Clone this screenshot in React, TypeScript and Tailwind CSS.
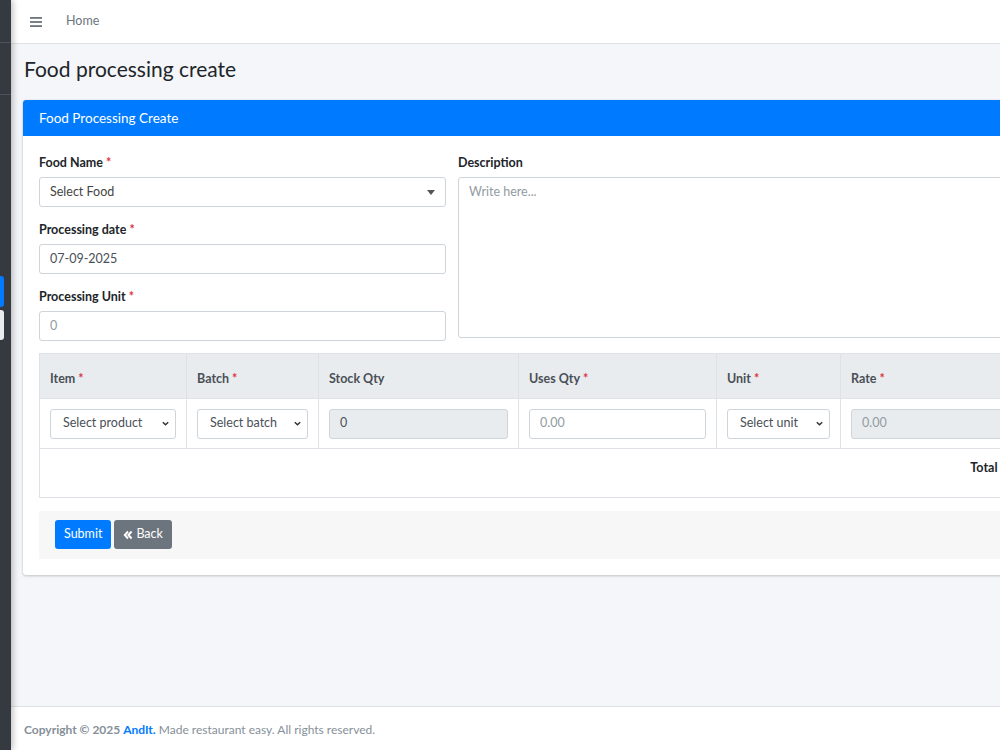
import React from 'react';

const font = { fontFamily: 'Lato, "Noto Sans", sans-serif' };

function Req() {
  return <span className="text-[#dc3545] ml-[3px]">*</span>;
}

function Chevron() {
  return (
    <svg width="9" height="9" viewBox="0 0 10 10" className="shrink-0">
      <path d="M2 3.5 L5 6.5 L8 3.5" fill="none" stroke="#333" strokeWidth="1.6" />
    </svg>
  );
}

function NativeSelect({ label }: { label: string }) {
  return (
    <div className="h-[30px] border border-[#ced4da] rounded-[3px] bg-white flex items-center justify-between pl-[12px] pr-[5px] text-[12.5px] text-[#495057]">
      <span>{label}</span>
      <Chevron />
    </div>
  );
}

function Field({ label, children }: { label: string; children: React.ReactNode }) {
  return (
    <div className="mb-[12px]">
      <div className="h-[19px] mb-[6px] pt-[1px] text-[12.5px] font-bold text-[#212529] leading-[19px]">
        {label}
        <Req />
      </div>
      {children}
    </div>
  );
}

export default function App() {
  return (
    <div className="w-[1000px] h-[750px] overflow-hidden flex bg-[#f4f6f9]" style={font}>
      {/* collapsed sidebar */}
      <aside className="w-[11px] shrink-0 bg-[#343a40] flex flex-col shadow-[2px_0_6px_rgba(0,0,0,0.25)] z-10">
        <div className="h-[43px] border-b border-[#4b545c]" />
        <div className="h-[52px] border-b border-[#4b545c]" />
        <div className="h-[181px]" />
        <div className="w-[4px] h-[31px] bg-[#007bff] rounded-r-[3px]" />
        <div className="w-[4px] h-[30px] mt-[3px] bg-[#e9ecef] rounded-r-[3px]" />
      </aside>

      <div className="w-[1330px] shrink-0 flex flex-col">
        {/* navbar */}
        <nav className="h-[44px] bg-white border-b border-[#dee2e6] flex items-center shrink-0">
          <svg width="12" height="10" viewBox="0 0 12 10" className="ml-[19px]">
            <rect x="0" y="0" width="12" height="1.8" fill="#6c757d" />
            <rect x="0" y="4.1" width="12" height="1.8" fill="#6c757d" />
            <rect x="0" y="8.2" width="12" height="1.8" fill="#6c757d" />
          </svg>
          <span className="ml-[24px] text-[12.5px] text-[#6c757d]">Home</span>
        </nav>

        {/* content */}
        <main className="flex-1 px-[12px]">
          <h1 className="mt-[11px] h-[28px] text-[21px] leading-[28px] text-[#212529] pl-[1px]">Food processing create</h1>

          <div className="mt-[17px] bg-white rounded-[3px] shadow-[0_0_1px_rgba(0,0,0,0.13),0_1px_3px_rgba(0,0,0,0.2)]">
            <div className="h-[36px] bg-[#007bff] rounded-t-[3px] px-[16px] flex items-center text-white text-[13.5px]">
              Food Processing Create
            </div>

            <div className="p-[16px]">
              <div className="grid grid-cols-[407px_1fr] gap-x-[12px]">
                <div>
                  <Field label="Food Name">
                    <div className="h-[30px] border border-[#ced4da] rounded-[3px] flex items-center justify-between pl-[10px] pr-[10px] text-[12.5px] text-[#444]">
                      <span>Select Food</span>
                      <svg width="8" height="5" viewBox="0 0 8 5">
                        <path d="M0 0 L8 0 L4 5 Z" fill="#555" />
                      </svg>
                    </div>
                  </Field>
                  <Field label="Processing date">
                    <div className="h-[30px] border border-[#ced4da] rounded-[3px] flex items-center px-[10px] text-[12.5px] text-[#495057]">
                      07-09-2025
                    </div>
                  </Field>
                  <Field label="Processing Unit">
                    <div className="h-[30px] border border-[#ced4da] rounded-[3px] flex items-center px-[10px] text-[12.5px] text-[#939ba2]">
                      0
                    </div>
                  </Field>
                </div>
                <div>
                  <div className="h-[19px] mb-[6px] pt-[1px] text-[12.5px] font-bold text-[#212529] leading-[19px]">Description</div>
                  <div className="h-[161px] border border-[#ced4da] rounded-[3px] px-[10px] py-[5px] text-[12.5px] text-[#939ba2]">
                    Write here...
                  </div>
                </div>
              </div>

              {/* items table */}
              <table className="w-full border-collapse border border-[#dee2e6] text-[12.5px]">
                <thead>
                  <tr className="bg-[#e9ecef] h-[45px] text-left text-[12.5px] font-bold text-[#495057]">
                    <th className="w-[147px] border border-[#dee2e6] px-[10px] pt-[6px] font-bold">Item<Req /></th>
                    <th className="w-[132px] border border-[#dee2e6] px-[10px] pt-[6px] font-bold">Batch<Req /></th>
                    <th className="w-[200px] border border-[#dee2e6] px-[10px] pt-[6px] font-bold">Stock Qty</th>
                    <th className="w-[198px] border border-[#dee2e6] px-[10px] pt-[6px] font-bold">Uses Qty<Req /></th>
                    <th className="w-[124px] border border-[#dee2e6] px-[10px] pt-[6px] font-bold">Unit<Req /></th>
                    <th className="w-[167px] border border-[#dee2e6] px-[10px] pt-[6px] font-bold">Rate<Req /></th>
                    <th className="border border-[#dee2e6] px-[10px]" />
                  </tr>
                </thead>
                <tbody>
                  <tr className="h-[50px]">
                    <td className="border border-[#dee2e6] px-[10px]"><NativeSelect label="Select product" /></td>
                    <td className="border border-[#dee2e6] px-[10px]"><NativeSelect label="Select batch" /></td>
                    <td className="border border-[#dee2e6] px-[10px]">
                      <div className="h-[30px] border border-[#ced4da] rounded-[3px] bg-[#e9ecef] flex items-center px-[10px] text-[#495057]">0</div>
                    </td>
                    <td className="border border-[#dee2e6] px-[10px]">
                      <div className="h-[30px] border border-[#ced4da] rounded-[3px] flex items-center px-[10px] text-[#939ba2]">0.00</div>
                    </td>
                    <td className="border border-[#dee2e6] px-[10px]"><NativeSelect label="Select unit" /></td>
                    <td colSpan={2} className="border border-[#dee2e6] px-[10px]">
                      <div className="h-[30px] border border-[#ced4da] rounded-[3px] bg-[#e9ecef] flex items-center px-[10px] text-[#939ba2]">0.00</div>
                    </td>
                  </tr>
                  <tr className="h-[49px]">
                    <td colSpan={6} className="border-t border-b border-[#dee2e6] px-[10px] text-right font-bold text-[12.5px] text-[#212529] align-middle pb-[10px]">
                      Total
                    </td>
                    <td className="border-t border-b border-[#dee2e6] px-[10px]" />
                  </tr>
                </tbody>
              </table>

              {/* footer actions */}
              <div className="mt-[13px] bg-[#f7f7f7] h-[48px] px-[16px] pb-[1px] flex items-center gap-[3px]">
                <button className="h-[29px] px-[9px] rounded-[3px] bg-[#007bff] text-white text-[12.5px]">Submit</button>
                <button className="h-[29px] px-[9px] rounded-[3px] bg-[#6c757d] text-white text-[12.5px] flex items-center gap-[3px]">
                  <svg width="10" height="10" viewBox="0 0 10 10">
                    <path d="M5 1.5 L1.8 5 L5 8.5 M8.6 1.5 L5.4 5 L8.6 8.5" fill="none" stroke="#fff" strokeWidth="1.9" />
                  </svg>
                  Back
                </button>
              </div>
            </div>
          </div>
        </main>

        {/* footer */}
        <footer className="h-[44px] shrink-0 bg-white border-t border-[#dee2e6] flex items-center pt-[3px] px-[13px] text-[12px] text-[#869099]">
          <span className="font-bold">Copyright © 2025&nbsp;</span>
          <span className="font-bold text-[#007bff]">AndIt.</span>
          <span>&nbsp;Made restaurant easy. All rights reserved.</span>
        </footer>
      </div>
    </div>
  );
}
